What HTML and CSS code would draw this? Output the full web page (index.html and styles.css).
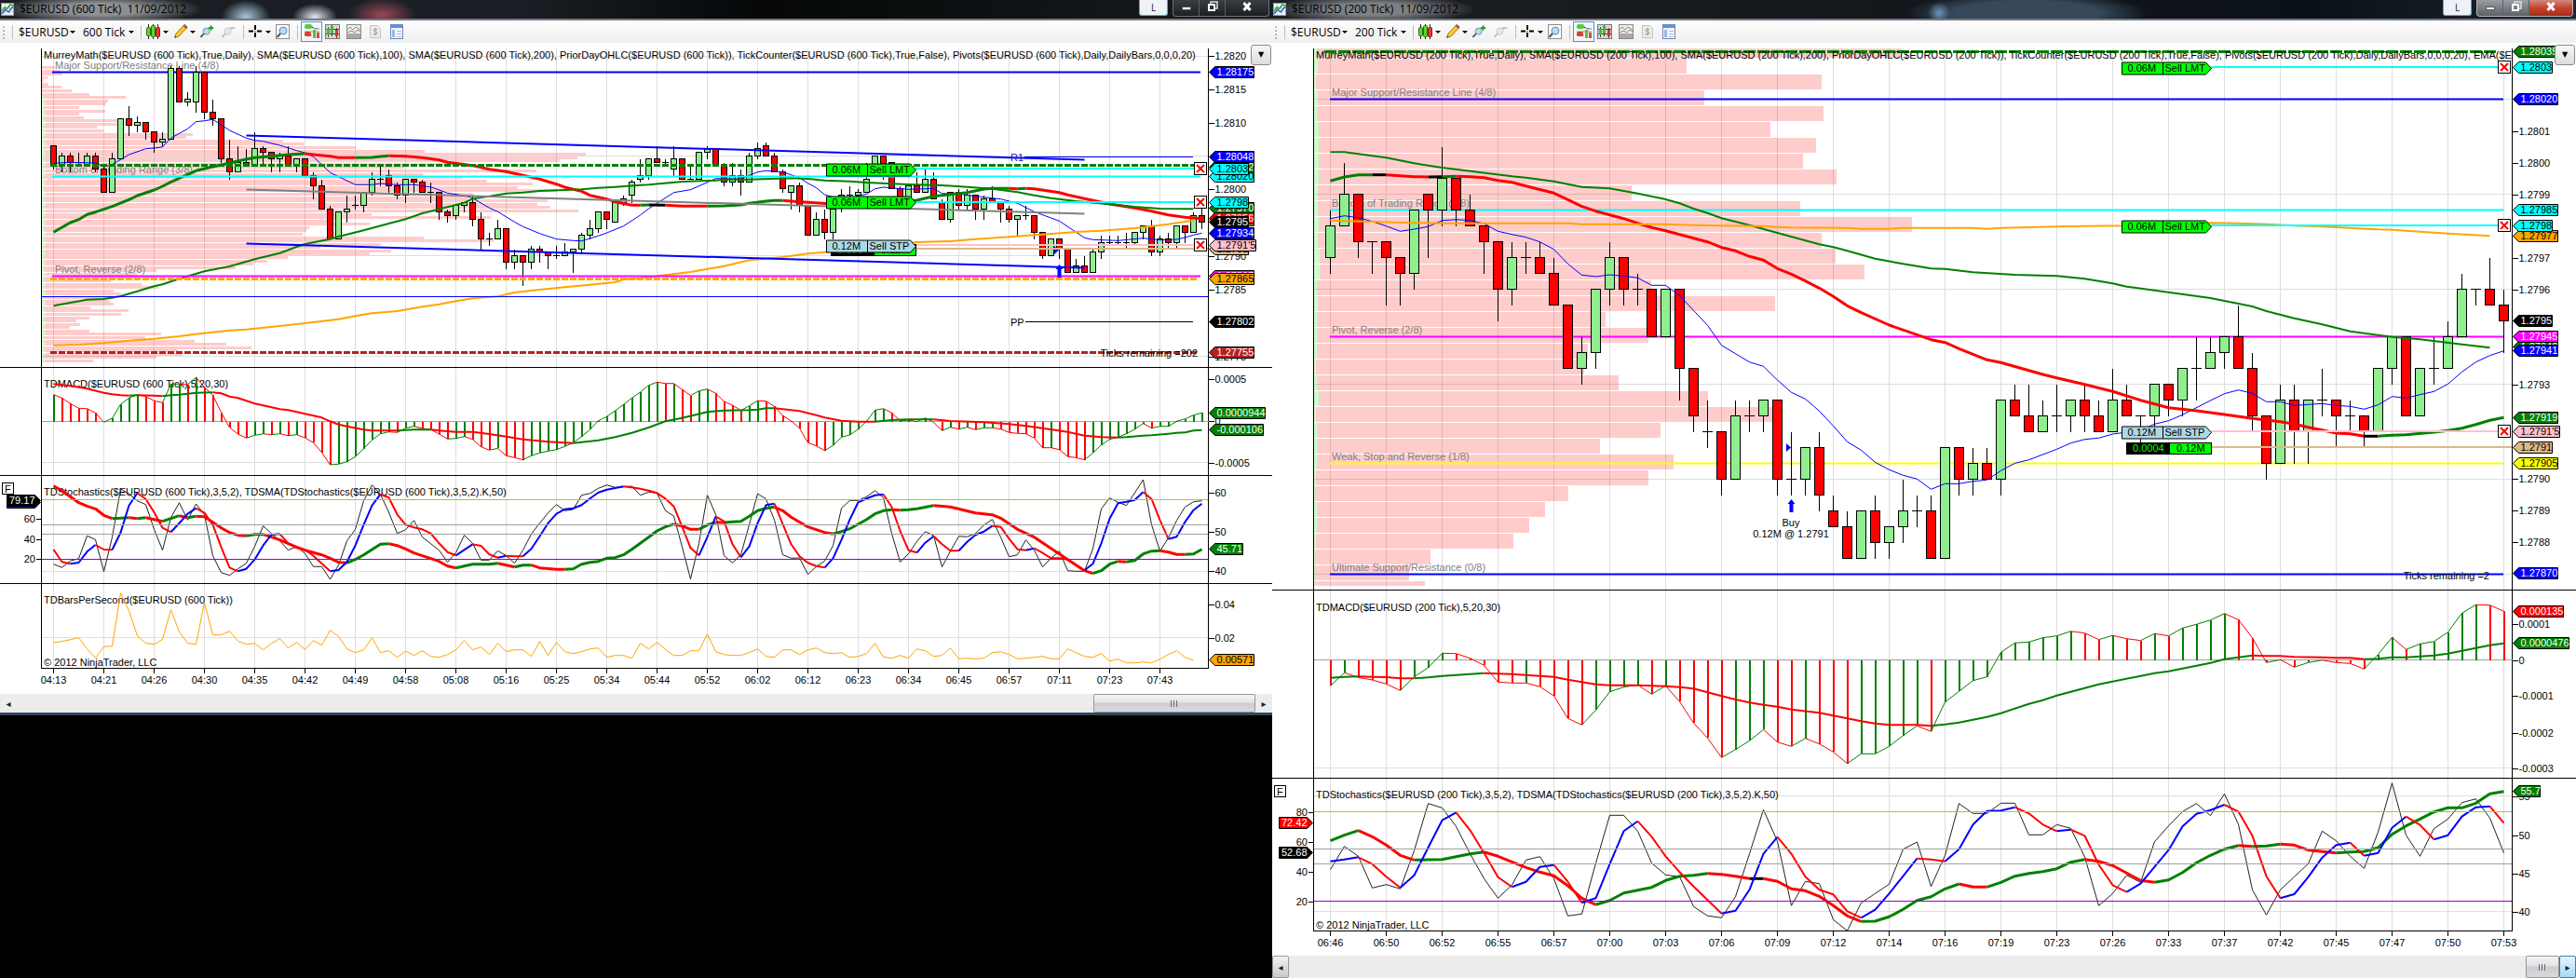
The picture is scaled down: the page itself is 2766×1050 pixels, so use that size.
FILE: index.html
```html
<!DOCTYPE html>
<html lang="en">
<head>
    <meta charset="UTF-8">
    <meta name="viewport" content="width=device-width, initial-scale=1.0">
    <title>$EURUSD Charts</title>
    <link rel="stylesheet" href="styles.css">
</head>
<body>

    <!-- Shared icons -->
    <svg class="icon-defs" width="0" height="0" aria-hidden="true">
        <symbol id="i-app" viewBox="0 0 14 14">
            <rect x="0.5" y="0.5" width="13" height="13" fill="#f4f8fb" stroke="#8aa0b4"/>
            <path d="M4.500 1v12M9.500 1v12M1 5.500h12M1 9.500h12" stroke="#c3d3e2" fill="none"/>
            <path d="M1 9l3-4 3 1 3-4 3 1" stroke="#2fa52f" stroke-width="1.500" fill="none"/>
            <path d="M1 12l4-5 3 3 5-6" stroke="#2b62c4" stroke-width="1.500" fill="none"/>
        </symbol>
        <symbol id="i-candles" viewBox="0 0 16 16">
            <path d="M2.500 0v16M7.500 0v16M12.500 0v16" stroke="#222"/>
            <rect x="0.500" y="3.500" width="4" height="9" rx="1" fill="#5fd42c" stroke="#2a6d12"/>
            <rect x="5.500" y="1.500" width="4" height="12" rx="1" fill="#5fd42c" stroke="#2a6d12"/>
            <rect x="10.500" y="3.500" width="4" height="10" rx="1" fill="#e8392c" stroke="#8c1a12"/>
        </symbol>
        <symbol id="i-pencil" viewBox="0 0 16 16">
            <path d="M1.500 14.500l1.500-4.500 8-8.500 3 3-8 8.500z" fill="#f7c92e" stroke="#a8741a"/>
            <path d="M11 1.500l3 3 1-1.500-2.500-2.500z" fill="#d05c4c" stroke="#8c4a3a"/>
            <path d="M1.500 14.500l.7-2 1.300 1.200z" fill="#333"/>
        </symbol>
        <symbol id="i-zoomin" viewBox="0 0 18 16">
            <circle cx="7.500" cy="7.500" r="4" fill="#b9dcf3" stroke="#6c8ba6"/>
            <path d="M4.500 10.500l-4 4" stroke="#555" stroke-width="2"/>
            <path d="M13 0.500v6M10 3.500h6" stroke="#19a519" stroke-width="2"/>
        </symbol>
        <symbol id="i-zoomout" viewBox="0 0 18 16">
            <circle cx="7.500" cy="7.500" r="4" fill="#e6e6e6" stroke="#c4c4c4"/>
            <path d="M4.500 10.500l-4 4" stroke="#bdbdbd" stroke-width="2"/>
            <path d="M10 3.500h6" stroke="#bdbdbd" stroke-width="2"/>
        </symbol>
        <symbol id="i-cross" viewBox="0 0 16 16">
            <path d="M7 1v5M7 9v5M0 7.500h5M9 7.500h5" stroke="#000" stroke-width="2"/>
            <rect x="6.500" y="7" width="1" height="1"/>
        </symbol>
        <symbol id="i-find" viewBox="0 0 16 16">
            <rect x="0.500" y="0.500" width="14" height="15" fill="#fff" stroke="#8c8c8c"/>
            <circle cx="8" cy="7" r="4" fill="#b9dcf3" stroke="#6c8ba6"/>
            <path d="M5 10l-3.500 4" stroke="#555" stroke-width="2"/>
        </symbol>
        <symbol id="i-trader" viewBox="0 0 16 16">
            <path d="M0 3h9l2 2h5M0 8h16M0 12h8" stroke="#888"/>
            <rect x="0" y="0" width="8" height="5" rx="2" fill="#62c83a"/>
            <rect x="0" y="8" width="7" height="5" rx="2" fill="#e23b30"/>
            <rect x="9" y="6" width="3" height="9" fill="#5fbf35"/>
            <rect x="13" y="9" width="3" height="6" fill="#d84a3e"/>
        </symbol>
        <symbol id="i-bars" viewBox="0 0 16 16">
            <rect x="0.500" y="0.500" width="15" height="15" fill="#d8d8d8" stroke="#777"/>
            <path d="M3.500 3v11M7.500 1v12M12.500 4v11M1 5.500h14M1 10.500h14" stroke="#444"/>
            <rect x="2" y="5" width="3" height="6" fill="#47b82a"/>
            <rect x="6" y="2" width="3" height="8" fill="#47b82a"/>
            <rect x="11" y="6" width="3" height="7" fill="#dd3226"/>
        </symbol>
        <symbol id="i-lines" viewBox="0 0 16 16">
            <rect x="0.500" y="0.500" width="15" height="15" fill="#ececec" stroke="#8a8a8a"/>
            <rect x="1" y="10" width="14" height="5" fill="#a9a9a9"/>
            <path d="M1 6l3-3 3 3 3-3 5 3" stroke="#4fae75" fill="none"/>
            <path d="M1 9l4-2 4 2 3-3 3 2" stroke="#d9635b" fill="none"/>
        </symbol>
        <symbol id="i-dollar" viewBox="0 0 16 16">
            <path d="M2.500 1.500h8l3 3v10h-11z" fill="#ececec" stroke="#c4c4c4"/>
            <path d="M10 6c-1-1.500-4-1-4 .500s4 1 4 3-3.500 2-4.500.500M8 4v8" stroke="#9b9b9b" fill="none"/>
        </symbol>
        <symbol id="i-props" viewBox="0 0 16 16">
            <rect x="1.500" y="0.500" width="13" height="15" fill="#f3f6fc" stroke="#6f86b4"/>
            <rect x="2" y="1" width="12" height="3" fill="#5b93ee"/>
            <rect x="3" y="6" width="3" height="8" fill="#9bb4f0"/>
            <path d="M8 7.500h5M8 10.500h5M8 13.500h5" stroke="#b3bccd"/>
        </symbol>
    </svg>

    <main class="desktop">

        <!-- 600 tick window -->
        <section class="window window-600">
            <header class="titlebar">
                <svg class="app-icon" aria-hidden="true"><use href="#i-app"/></svg>
                <h1>$EURUSD (600 Tick)&nbsp; 11/09/2012</h1>
                <button class="link-btn" type="button">L</button>
                <div class="controls">
                    <button type="button" aria-label="Minimize"><svg viewBox="0 0 14 12"><rect x="2.500" y="6.500" width="9" height="3" fill="#fff" stroke="#555"/></svg></button>
                    <button type="button" aria-label="Restore"><svg viewBox="0 0 14 12"><path d="M5 3V1h7v7h-2" fill="none" stroke="#ddd" stroke-width="1.500"/><rect x="3" y="4" width="6" height="6" fill="none" stroke="#fff" stroke-width="2"/></svg></button>
                    <button class="close" type="button" aria-label="Close"><svg viewBox="0 0 14 12"><path d="M3.500 2l7 8M10.500 2l-7 8" stroke="#fff" stroke-width="3"/></svg></button>
                </div>
            </header>
            <nav class="toolbar" aria-label="600 tick toolbar">
                <span class="grip"></span>
                <span class="sep"></span>
                <label class="pick pick-symbol"><select aria-label="Instrument"><option>$EURUSD</option></select></label>
                <label class="pick pick-period"><select aria-label="Interval"><option>600 Tick</option></select></label>
                <span class="sep"></span>
                <button class="tool drop" type="button" aria-label="Chart style"><svg><use href="#i-candles"/></svg></button>
                <button class="tool drop" type="button" aria-label="Drawing tools"><svg><use href="#i-pencil"/></svg></button>
                <button class="tool" type="button" aria-label="Zoom in"><svg><use href="#i-zoomin"/></svg></button>
                <button class="tool" type="button" aria-label="Zoom out"><svg><use href="#i-zoomout"/></svg></button>
                <span class="sep"></span>
                <button class="tool drop" type="button" aria-label="Cross hair"><svg><use href="#i-cross"/></svg></button>
                <button class="tool" type="button" aria-label="Data box"><svg><use href="#i-find"/></svg></button>
                <span class="sep"></span>
                <div class="tool-group">
                    <button class="tool selected" type="button" aria-label="Chart trader"><svg><use href="#i-trader"/></svg></button>
                    <button class="tool" type="button" aria-label="Data series"><svg><use href="#i-bars"/></svg></button>
                    <button class="tool" type="button" aria-label="Indicators"><svg><use href="#i-lines"/></svg></button>
                    <button class="tool" type="button" aria-label="Strategies"><svg><use href="#i-dollar"/></svg></button>
                    <button class="tool" type="button" aria-label="Properties"><svg><use href="#i-props"/></svg></button>
                </div>
            </nav>
            <div class="chart" id="chart600">
                <button class="menu-btn" type="button" aria-label="Chart menu">&#9660;</button>
            </div>
            <div class="scrollbar">
                <button class="arrow" type="button" aria-label="Scroll left">&#9666;</button>
                <div class="track"><span class="thumb thumb-wide"></span></div>
                <button class="arrow" type="button" aria-label="Scroll right">&#9656;</button>
            </div>
        </section>

        <!-- 200 tick window -->
        <section class="window window-200">
            <header class="titlebar">
                <svg class="app-icon" aria-hidden="true"><use href="#i-app"/></svg>
                <h1>$EURUSD (200 Tick)&nbsp; 11/09/2012</h1>
                <button class="link-btn" type="button">L</button>
                <div class="controls">
                    <button type="button" aria-label="Minimize"><svg viewBox="0 0 14 12"><rect x="2.500" y="6.500" width="9" height="3" fill="#fff" stroke="#555"/></svg></button>
                    <button type="button" aria-label="Restore"><svg viewBox="0 0 14 12"><path d="M5 3V1h7v7h-2" fill="none" stroke="#ddd" stroke-width="1.500"/><rect x="3" y="4" width="6" height="6" fill="none" stroke="#fff" stroke-width="2"/></svg></button>
                    <button class="close" type="button" aria-label="Close"><svg viewBox="0 0 14 12"><path d="M3.500 2l7 8M10.500 2l-7 8" stroke="#fff" stroke-width="3"/></svg></button>
                </div>
            </header>
            <nav class="toolbar" aria-label="200 tick toolbar">
                <span class="grip"></span>
                <span class="sep"></span>
                <label class="pick pick-symbol"><select aria-label="Instrument"><option>$EURUSD</option></select></label>
                <label class="pick pick-period"><select aria-label="Interval"><option>200 Tick</option></select></label>
                <span class="sep"></span>
                <button class="tool drop" type="button" aria-label="Chart style"><svg><use href="#i-candles"/></svg></button>
                <button class="tool drop" type="button" aria-label="Drawing tools"><svg><use href="#i-pencil"/></svg></button>
                <button class="tool" type="button" aria-label="Zoom in"><svg><use href="#i-zoomin"/></svg></button>
                <button class="tool" type="button" aria-label="Zoom out"><svg><use href="#i-zoomout"/></svg></button>
                <span class="sep"></span>
                <button class="tool drop" type="button" aria-label="Cross hair"><svg><use href="#i-cross"/></svg></button>
                <button class="tool" type="button" aria-label="Data box"><svg><use href="#i-find"/></svg></button>
                <span class="sep"></span>
                <div class="tool-group">
                    <button class="tool selected" type="button" aria-label="Chart trader"><svg><use href="#i-trader"/></svg></button>
                    <button class="tool" type="button" aria-label="Data series"><svg><use href="#i-bars"/></svg></button>
                    <button class="tool" type="button" aria-label="Indicators"><svg><use href="#i-lines"/></svg></button>
                    <button class="tool" type="button" aria-label="Strategies"><svg><use href="#i-dollar"/></svg></button>
                    <button class="tool" type="button" aria-label="Properties"><svg><use href="#i-props"/></svg></button>
                </div>
            </nav>
            <div class="chart" id="chart200">
                <button class="menu-btn" type="button" aria-label="Chart menu">&#9660;</button>
            </div>
            <div class="scrollbar">
                <button class="arrow arrow-raised" type="button" aria-label="Scroll left">&#9666;</button>
                <div class="track"><span class="thumb"></span></div>
                <button class="arrow arrow-hot" type="button" aria-label="Scroll right">&#9656;</button>
            </div>
        </section>
    </main>

    <script src="charts.js"></script>
</body>
</html>
```

FILE: styles.css
```css
* {
    box-sizing: border-box;
}
body {
    margin: 0;
    background: #000;
    font-family: "Open Sans", "Noto Sans", sans-serif;
    font-size: 12px;
}
button {
    margin: 0;
    padding: 0;
    border: none;
    background: none;
    font: inherit;
}
.icon-defs {
    position: absolute;
}
.desktop {
    display: grid;
    grid-template-columns: 1366fr 1400fr;
    align-items: start;
}
.window {
    background: #fff;
    min-width: 0;
}
.window-600 {
    border-bottom: 3px solid #33475c;
}

/* Title bar */
.titlebar {
    display: flex;
    align-items: center;
    height: 22px;
    padding: 0 3px 0 1px;
    border-bottom: 2px solid #75797f;
    background: #12161b;
}
.window-600 .titlebar {
    background:
        radial-gradient(ellipse 110px 16px at 108px 10px, #8d8f92 40%, transparent),
        radial-gradient(ellipse 26px 18px at 264px 18px, #a9c6da, transparent),
        radial-gradient(ellipse 24px 14px at 338px 18px, #dfe6f2, transparent),
        radial-gradient(ellipse 36px 18px at 410px 16px, #9c4656, transparent),
        linear-gradient(90deg, #1a1d22, #1b2026 40%, #050708 60%, #1a1d20);
}
.window-200 .titlebar {
    background:
        radial-gradient(ellipse 110px 16px at 108px 10px, #7d8084 40%, transparent),
        radial-gradient(ellipse 12px 12px at 716px 14px, #6d93b4, transparent),
        radial-gradient(ellipse 130px 22px at 810px 14px, #36485a 60%, transparent),
        linear-gradient(90deg, #1c2024, #15191e 40%, #0b1118 80%, #1c252d);
}
.app-icon {
    width: 14px;
    height: 14px;
    margin-right: 6px;
}
.titlebar h1 {
    margin: 0;
    flex: 1;
    font-size: 12px;
    font-weight: normal;
    line-height: 20px;
    color: #000;
}
.link-btn {
    align-self: flex-start;
    width: 31px;
    height: 17px;
    margin-right: 5px;
    border: 1px solid #3fb4e0;
    border-top: none;
    border-radius: 0 0 3px 3px;
    background: #eef2f4;
    font-size: 10px;
    line-height: 14px;
    color: #223;
}
.controls {
    display: flex;
    align-self: flex-start;
    height: 18px;
    border: 1px solid #6d7278;
    border-top: none;
    border-radius: 0 0 4px 4px;
    background: linear-gradient(#3a3e43, #1c1f22);
    overflow: hidden;
}
.controls button {
    width: 28px;
    border-right: 1px solid #5b6066;
}
.controls svg {
    width: 14px;
    height: 12px;
}
.controls .close {
    width: 46px;
    border-right: none;
}
.window-200 .controls {
    border-color: #b0b4b8;
    background: linear-gradient(#9a9da1, #5c6168);
}
.window-200 .controls .close {
    background: linear-gradient(#d08a80, #c8432c 50%, #a32c18);
}

/* Toolbar */
.toolbar {
    display: flex;
    align-items: center;
    gap: 5px;
    height: 24px;
    padding-left: 2px;
    background: linear-gradient(#fdfdfd, #efefef);
}
.grip {
    width: 6px;
    height: 15px;
    background: radial-gradient(circle at 2px 2px, #b8b8b8 1px, transparent 1px) 0 0 / 6px 4px repeat-y;
}
.sep {
    width: 1px;
    height: 15px;
    background: #bdbdbd;
}
.pick {
    position: relative;
    height: 20px;
}
.pick::after,
.drop::after {
    content: "";
    border: 3px solid transparent;
    border-top-color: #000;
    border-bottom: none;
}
.pick::after {
    position: absolute;
    right: 2px;
    top: 9px;
}
.pick select {
    appearance: none;
    width: 100%;
    height: 20px;
    padding: 0 0 0 1px;
    border: none;
    background: none;
    font: inherit;
    color: #000;
}
.pick-symbol {
    width: 64px;
}
.pick-period {
    width: 58px;
}
.tool {
    display: flex;
    align-items: center;
    width: 18px;
    height: 22px;
}
.tool svg {
    width: 16px;
    height: 16px;
}
.drop {
    width: 24px;
    gap: 2px;
}
.tool-group {
    display: flex;
    gap: 3px;
    margin-left: -2px;
}
.tool-group .tool {
    width: 20px;
}
.tool-group .selected {
    width: 23px;
    justify-content: center;
    border: 1px solid #3c9ae8;
    background: #f2f7fc;
}

/* Chart area */
.chart {
    position: relative;
    background: #fff;
}
.menu-btn {
    position: absolute;
    top: 2px;
    right: 1px;
    width: 22px;
    height: 22px;
    border: 1px solid #8a8a8a;
    border-radius: 3px;
    background: linear-gradient(#f6f6f6, #dcdcdc);
    font: 8px "DejaVu Sans", sans-serif;
    line-height: 18px;
}
.pane {
    display: block;
    width: 100%;
    height: auto;
    font-family: "Liberation Sans", Arial, sans-serif;
    font-size: 11px;
}
.pane text {
    fill: #000;
}
.pane .dim {
    fill: #808080;
}
.pane .navy {
    fill: #2020c0;
}
.pane .light {
    fill: #fff;
}
.pane .lime {
    fill: #00ff00;
}
.sharp {
    shape-rendering: crispEdges;
}

/* Scroll bar */
.scrollbar {
    display: flex;
    height: 20px;
    background: #ececec;
}
.window-200 .scrollbar {
    height: 24px;
}
.arrow {
    width: 18px;
    font: 10px "DejaVu Sans", sans-serif;
    color: #222;
}
.arrow-raised {
    border: 1px solid #9a9a9a;
    border-radius: 2px;
    background: linear-gradient(#f2f2f2, #c9c9cb);
}
.arrow-hot {
    border: 1px solid #3c7fb1;
    border-radius: 2px;
    background: linear-gradient(#e3f4fc, #a9dbf5);
}
.track {
    display: flex;
    flex: 1;
    justify-content: flex-end;
}
.thumb {
    width: 36px;
    border: 1px solid #979797;
    border-radius: 2px;
    background:
        repeating-linear-gradient(90deg, #6a6a6a 0 1px, transparent 1px 3px) center / 8px 7px no-repeat,
        linear-gradient(#f3f3f3, #e4e4e6 45%, #cdcdd1 50%, #dadade);
}
.thumb-wide {
    width: 174px;
}
```

FILE: charts.js
```js
const NS = "http://www.w3.org/2000/svg";
let clipCount = 0;

function add(parent, tag, attrs, text) {
    const node = document.createElementNS(NS, tag);
    for (const key in attrs) node.setAttribute(key, attrs[key]);
    if (text !== undefined) node.textContent = text;
    parent.appendChild(node);
    return node;
}

function label(svg, x, y, text, cls, anchor) {
    return add(svg, "text", { x, y: y + 4, class: cls || "", "text-anchor": anchor || "start" }, text);
}

function rect(svg, x, y, width, height, fill, opacity) {
    return add(svg, "rect", { x, y, width, height, fill, "fill-opacity": opacity || 1, class: "sharp" });
}

function hline(svg, x1, x2, y, stroke, width, extra) {
    return add(svg, "line", Object.assign({ x1, x2, y1: y, y2: y, stroke, "stroke-width": width || 1, class: "sharp" }, extra));
}

// Support level: solid core with a soft edge
function level(svg, x1, x2, y, color) {
    hline(svg, x1, x2, y, color, 3, { "stroke-opacity": 0.5 });
    hline(svg, x1, x2, y, color, 1);
}

function makePane(chart, top, height, name) {
    const svg = add(chart.root, "svg", {
        class: "pane", viewBox: `0 ${top} ${chart.width} ${height}`, role: "img", "aria-label": name
    });
    svg.top = top;
    svg.bottom = top + height;
    return svg;
}

function frame(chart, svg, gridRows, from) {
    const top = from || svg.top;
    gridRows.forEach(y => hline(svg, 45, chart.axis, y, "#dedede"));
    for (let i = 0; i < chart.times.length; i++) {
        const x = chart.x(i * chart.every);
        add(svg, "line", { x1: x, x2: x, y1: top, y2: svg.bottom, stroke: "#dedede", class: "sharp" });
    }
    [44.5, chart.axis].forEach(x =>
        add(svg, "line", { x1: x, x2: x, y1: top, y2: svg.bottom, stroke: "#000", class: "sharp" }));
}

// "i,value" pairs, values in thirds of a pixel below origin, optional trailing k = black
function parse(str) {
    return str.trim().split(/\s+/).map(p => {
        const [i, v] = p.split(",");
        return { i: +i, v: parseFloat(v), black: v.endsWith("k") };
    });
}
function values(str) {
    return str.trim().split(/\s+/).map((v, i) => ({ i, v: +v }));
}

function series(chart, svg, pts, origin, width, up, down) {
    let color = up;
    let d = "";
    let last = null;
    const flush = () => {
        if (d) add(svg, "path", { d, fill: "none", stroke: last, "stroke-width": width, "stroke-linejoin": "round" });
    };
    for (let n = 1; n < pts.length; n++) {
        const a = pts[n - 1], b = pts[n];
        if (b.v < a.v) color = up;
        if (b.v > a.v) color = down;
        const c = b.black ? "#000" : color;
        const end = `L${chart.x(b.i)} ${(origin + b.v / 3).toFixed(1)}`;
        if (c !== last) {
            flush();
            last = c;
            d = `M${chart.x(a.i)} ${(origin + a.v / 3).toFixed(1)}`;
        }
        d += end;
    }
    flush();
}

function histogram(chart, svg, pts, origin, zero) {
    hline(svg, 45, chart.axis, zero, "#a0a0a0");
    pts.forEach((p, n) => {
        const next = pts[n - 1] || { v: p.v - chart.firstBar };
        const color = p.v > next.v ? "#ff0000" : "#008000";
        const y = Math.round(origin + p.v / 3);
        rect(svg, chart.x(p.i) - 1, Math.min(y, zero), 2, Math.abs(y - zero), color);
    });
    series(chart, svg, pts, origin, 1, "#008000", "#ff0000");
}

// Candle: colour,high,top,bottom,low in half pips below the first level
function candles(chart, svg, str) {
    const half = chart.step > 10 ? 5 : 3;
    str.trim().split(/\s+/).forEach((c, i) => {
        const p = c.slice(1).split(",").map(n => Math.round(chart.base + n * chart.halfPip) - 0.5);
        const x = chart.x(i);
        add(svg, "line", { x1: x, x2: x, y1: p[0], y2: p[3] + 0.5, stroke: "#000", class: "sharp" });
        if (p[1] === p[2]) {
            hline(svg, x - half - 0.5, x + half + 0.5, p[1], "#000");
            return;
        }
        add(svg, "rect", {
            x: x - half, y: p[1], width: half * 2, height: p[2] - p[1],
            fill: c[0] === "g" ? "#90ee90" : "#ff0000", stroke: "#000", class: "sharp"
        });
    });
}

function axisLabels(chart, svg, rows) {
    rows.forEach(([y, text]) => {
        hline(svg, chart.axis, chart.axis + 6, y, "#000");
        label(svg, chart.axis + 7, y, text);
    });
}
function leftLabels(svg, rows) {
    rows.forEach(([y, text]) => {
        hline(svg, 39, 44, y, "#000");
        label(svg, 38, y, text, "", "end");
    });
}

// Price flag, tip on the axis
function tag(chart, svg, y, text, fill, width, cls) {
    const x = chart.axis + 1;
    add(svg, "path", { d: `M${x} ${y + 0.5}l6 -6h${width}v12h-${width}z`, fill, stroke: "#000" });
    label(svg, x + 8, y, text, cls);
}
function leftTag(svg, y, text, fill) {
    add(svg, "path", { d: `M43.500 ${y + 0.5}l-6 -6h-30v12h30z`, fill, stroke: "#000" });
    label(svg, 10, y, text, "light");
}

function order(svg, x, y, qty, kind, fill) {
    add(svg, "path", { d: `M${x} ${y - 6}h90l6 6.500l-6 6.500h-90z`, fill, stroke: "#000" });
    add(svg, "line", { x1: x + 44, x2: x + 44, y1: y - 6, y2: y + 7, stroke: "#000", class: "sharp" });
    label(svg, x + 6, y, qty);
    label(svg, x + 46, y, kind);
}
function position(svg, x, y) {
    rect(svg, x, y - 6, 92, 13, "#000");
    rect(svg, x + 47, y - 5, 44, 11, "#00ff00");
    label(svg, x + 7, y, "0.0004", "lime");
    label(svg, x + 54, y, "0.12M");
}
function cancelBox(svg, x, y) {
    add(svg, "rect", { x: x + 0.5, y: y - 6.5, width: 13, height: 13, fill: "#fff", stroke: "#000", class: "sharp" });
    add(svg, "path", { d: `M${x + 3} ${y - 4}l8 8m0 -8l-8 8`, stroke: "#ff0000", "stroke-width": 2 });
}

function heading(chart, svg, tick) {
    const s = `$EURUSD (${tick} Tick)`;
    const id = "clip" + clipCount++;
    const clip = add(svg, "clipPath", { id });
    add(clip, "rect", { x: 45, y: svg.top, width: chart.axis - 45, height: 30 });
    const t = label(svg, 47, 59,
        `MurreyMath(${s},True,Daily), SMA(${s},100), SMA(${s},200), PriorDayOHLC(${s}), ` +
        `TickCounter(${s},True,False), Pivots(${s},Daily,DailyBars,0,0,0,20)` + (tick === 200 ? ", EMA($EURUSD (200 Tick),20)" : ""));
    t.setAttribute("clip-path", `url(#${id})`);
}

function timeAxis(chart, top, height) {
    const svg = makePane(chart, top, height, "Time axis");
    hline(svg, 44, chart.axis + 0.5, top + 0.5, "#000");
    chart.times.forEach((t, n) => {
        const x = chart.x(n * chart.every);
        add(svg, "line", { x1: x, x2: x, y1: top, y2: top + 6, stroke: "#000", class: "sharp" });
        label(svg, x, top + 13, t, "", "middle");
    });
}

function focusBox(svg, y) {
    add(svg, "rect", { x: 2.5, y: y - 6, width: 12, height: 12, fill: "#fff", stroke: "#000", class: "sharp" });
    label(svg, 5, y, "F");
}

function buyArrow(svg, x, y) {
    add(svg, "path", { d: `M${x} ${y}l4 5h-2v9h-4v-9h-2z`, fill: "#0000ff" });
}


/* ---------- 600 tick chart ---------- */

const c600 = {
    root: document.getElementById("chart600"), width: 1366, axis: 1297.5, step: 9, every: 6,
    base: 78, halfPip: 3.58, firstBar: -1, x: i => 57.5 + i * 9,
    times: "04:13 04:21 04:26 04:30 04:35 04:42 04:49 04:58 05:08 05:16 05:25 05:34 05:44 05:52 06:02 06:12 06:23 06:34 06:45 06:57 07:11 07:23 07:43".split(" ")
};

function price600() {
    const svg = makePane(c600, 46, 349, "$EURUSD 600 tick price");
    frame(c600, svg, [60.5, 167.5, 274.5, 382.5], 52);

    const profile = [61, 66, 69, 53, 49, 54, 68, 79, 98, 135, 115, 112, 85, 112, 83, 90,
        132, 127, 104, 110, 205, 200, 303, 324, 382, 455, 627, 620, 600, 497, 434, 575, 452, 497, 522, 570,
        556, 597, 506, 502, 587, 575, 591, 620, 397, 527, 350, 395, 332, 328, 323, 455, 529, 407, 344, 419,
        395, 309, 286, 270, 253, 167, 145, 168, 118, 150, 170, 121, 128, 123, 117, 120, 97, 137, 128, 96,
        81, 84, 75, 95, 171, 156, 208, 241, 270, 190, 194, 168, 99];
    profile.forEach((end, n) => {
        const y = Math.round(71 + n * 3.58);
        if (n > 8) rect(svg, 45, y, n % 3 + 2, 3, "#00ff00", 0.2);
        rect(svg, n > 8 ? 47 + n % 3 : 45, y, end - 47, 3, "#ff0000", 0.2);
    });

    label(svg, 59, 70, "Major Support/Resistance Line (4/8)", "dim");
    label(svg, 59, 182, "Bottom of Trading Range (3/8)", "dim");
    label(svg, 59, 289, "Pivot, Reverse (2/8)", "dim");
    heading(c600, svg, 600);
    level(svg, 56, 1289, 77.5, "#0000ff");

    candles(c600, svg, `
        r22,22,28,29 g24,25,28,30 r24,25,27,30 r24,27,27,28 g24,25,28,28 r24,25,29,30 r28,29,36,36 g24,26,36,36
        g14,14,26,26 r10,14,16,19 g13,15,16,18 r15,15,18,20 r18,18,21,24 g18,20,21,22 g-2,-1,20,20 r-2,-1,9,9
        g6,8,9,10 g-2,0,9,12 r0,0,12,14 r8,12,14,16 r14,14,26,27 r20,26,30,32 g22,27,30,30 r23,27,28,28
        g18,23,28,28 r22,23,24,28 r24,24,26,30 g24,25,26,30 r22,25,28,28 g26,26,28,30 r26,26,31,31 r30,31,34,38
        r32,34,41,41 r40,41,50,50 g42,42,50,50 g37,41,42,45 r37,40,40,41 g36,36,40,42 g30,32,36,37 r28,32,32,34
        r29,31,34,36 r33,34,37,38 g32,32,37,39 r32,32,33,36 r32,33,36,36 r33,36,36,39 r36,36,42,44 r41,42,43,45
        g40,40,43,44 g39,39,40,42 r37,39,44,46 r42,44,50,53 r48,50,50,52 g44,47,50,50 r47,47,57,59 g53,55,57,59
        r55,55,57,64 g52,53,57,59 r52,53,54,57 r54,54,55,59 r52,55,55,56 g51,54,55,55 g53,53,54,60 g48,49,53,54
        g44,47,49,50 g42,42,47,48 r42,42,44,47 g38,39,45,45 g37,38,39,40 g32,33,37,39 g26,31,32,33 g26,26,31,32
        r22,26,27,27 r26,27,27,28 g22,26,29,31 r26,26,32,32 r28,32,32,32 g24,24,32,32 g22,23,24,26 r23,23,28,28
        r27,28,33,34 g27,31,33,34 r29,31,33,37 g24,25,33,33 g21,23,25,26 r21,22,25,25 r24,25,30,30 r29,30,35,36
        g34,34,36,41 r33,34,40,42 r40,40,49,49 g42,44,49,49 r41,44,48,50 g40,41,48,50 g35,37,40,42 r34,37,37,38
        g35,36,37,37 g27,32,36,36 g25,25,31,31 r25,25,31,32 r27,27,35,35 r34,35,38,38 g34,34,38,38 r30,34,36,36
        g29,32,36,36 r30,32,38,38 r38,39,44,44 g36,36,44,45 r35,36,40,41 g35,37,40,41 r37,37,41,44 g37,38,41,44
        r34,38,39,39 r39,39,41,45 r40,41,44,45 g43,43,44,49 r40,43,43,44 r43,43,48,50 r48,48,55,56 g50,50,55,55
        r50,50,53,56 r53,53,60,60 g56,58,60,60 r55,58,60,60 g53,54,60,60 g49,51,54,56 r49,51,51,52 r49,51,51,52
        r48,51,51,53 g48,48,51,52 g46,46,48,50 r44,46,54,55 g49,50,54,55 r48,50,51,53 g46,46,51,53 r46,46,48,51
        g42,43,48,48 r40,43,45,47`);

    series(c600, svg, parse(`0,346 2,343 5,345 6,357 7,350 8,334 9,318 11,299 12,297 13,293 14,265 16,235 17,212 18,209 19,205
        20,222 21,240 23,265 24,272 25,275 27,288 29,305 30,312 31,325 33,376 36,415 38,415 39,411 41,415 43,415 45,422 47,442
        49,450 50,458 52,490 53,502 55,535 56,550 58,572 60,590 62,595 63,596 65,580 66,570 68,548 70,513 71,492 72,475 74,440
        76,431 79,395 80,396 82,396 83,385 84,374 85,370 87,374 88,383 89,393 90,410 91,425 92,447 93,455 95,458 97,445 98,428
        99,423 102,430 104,428 105,427 106,443 108,444 110,452 113,461 115,475 117,502 119,522 120,532 122,568 123,586 124,592
        127,595 130,587 132,593 134,591 135,585 136,577 137,571`), 60, 1, "#0000ff", "#0000ff");
    series(c600, svg, parse(`0,932 3,930 6,925 9,917 12,911 15,903 17,896 21,884 23,881 27,870 30,861 34,848 36,838 38,829
        41,822 44,808 46,800 48,790 50,781 53,775 55,762 58,753 61,745 64,737 67,729 68,720 71,713 73,706 76,696 80,677 83,658
        87,648 90,637 93,630 103,600 107,597 110,590 114,583 118,575 122,567 125,563 129,555 133,542 136,530`), 60, 2, "#ffa500", "#ffa500");
    series(c600, svg, parse(`0,568 2,537 3,527 4,511 5,503 7,485 9,463 10,450 12,432 13,420 14,406 16,382 17,370 19,357 21,345
        23,333 24,328 26,323 28,318 30,315 31,318 33,323 34,328 36,328 38,327 39,324 40,322 42,323 44,328 46,335 47,343 50,353
        52,365 54,373 56,385 58,397 60,413 61,423 62,430 63,436 64,449 66,461 67,470 69,481 70,481 71,480 73,481k 75,484 78,484
        80,483 82,480 83,475 85,468 86,466 87,466 88,468 90,472 93,477 96,484 99,475 101,470 103,465 105,452 109,440 111,429
        112,427 114,427 115,428 116,427 117,428 120,440 121,448 123,460 126,477 129,490 131,500 133,512 135,520 137,524`),
        60, 3, "#008000", "#ff0000");
    series(c600, svg, parse(`0,805 2,795 4,785 6,783 8,774 10,758 12,742 13,736 15,718 18,694 21,678 24,655 27,635 29,615 30,606
        33,590 34,582 37,562 40,540 42,526 44,507 47,487 49,473 50,460 52,452 54,443 56,440 58,435 61,432 63,430 65,425 67,422
        70,416 71,415 75,405 79,401 80,398 83,398 88,394 90,396 92,401 95,404 97,408 102,414 106,417 109,422 112,428 115,439
        117,449 119,458 122,468 126,478 129,486 132,492 136,493`), 60, 2, "#008000", "#008000");

    level(svg, 56, 1289, 189.5, "#00ffff");
    level(svg, 56, 1289, 296.5, "#ff00ff");
    const dash = { "stroke-dasharray": "7 2" };
    hline(svg, 54, 1285, 177.5, "#008000", 3, dash);
    hline(svg, 54, 1285, 299.5, "#ffa500", 3, dash);
    hline(svg, 54, 1285, 378.5, "#b22222", 3, dash);
    hline(svg, 45, 1297, 318.5, "#0000ff");

    // Regression channel
    [[145.5, 171.5, "#0000ff"], [203.5, 229.5, "#808080"], [261.5, 287.5, "#0000ff"]].forEach(([y1, y2, stroke]) =>
        add(svg, "line", { x1: 264.5, x2: 1164.5, y1, y2, stroke, "stroke-width": 2 }));

    label(svg, 1085, 169, "R1", "navy");
    hline(svg, 1100, 1281, 168.5, "#0000ff");
    label(svg, 1085, 346, "PP");
    hline(svg, 1101, 1281, 345.5, "#000");
    label(svg, 1286, 379, "Ticks remaining =202", "", "end");

    buyArrow(svg, 1137.5, 284);
    add(svg, "path", { d: "M1132 264l5 4.500l-5 4.500z", fill: "#0000ff" });

    hline(svg, 983, 1283, 181, "#00ffff", 2);
    hline(svg, 983, 1283, 217, "#00ffff", 2);
    hline(svg, 983, 1283, 263, "#ffc0cb", 2);
    hline(svg, 983, 1297, 267, "#deb887", 2);
    order(svg, 887.5, 182, "0.06M", "Sell LMT", "#00ff00");
    order(svg, 887.5, 217, "0.06M", "Sell LMT", "#00ff00");
    position(svg, 892, 268);
    order(svg, 887.5, 264, "0.12M", "Sell STP", "#add8e6");
    [181, 217, 263].forEach(y => cancelBox(svg, 1282, y));

    axisLabels(c600, svg, [[60, "1.2820"], [96, "1.2815"], [132, "1.2810"], [203, "1.2800"], [275, "1.2790"], [311, "1.2785"], [383, "1.2775"]]);
    tag(c600, svg, 77, "1.28175", "#0000ff", 42, "light");
    tag(c600, svg, 189, "1.28020", "#00ffff", 42);
    tag(c600, svg, 179, "1.28032", "#008000", 42, "light");
    tag(c600, svg, 168, "1.28048", "#0000ff", 42, "light");
    tag(c600, svg, 181, "1.2803", "#00ffff", 36);
    tag(c600, svg, 223, "1.27970", "#008000", 42, "light");
    tag(c600, svg, 217, "1.2798", "#00ffff", 36);
    tag(c600, svg, 236, "1.27953", "#ffa500", 42);
    tag(c600, svg, 234, "1.27956", "#ff0000", 42, "light");
    tag(c600, svg, 238, "1.2795", "#000", 36, "light");
    tag(c600, svg, 250, "1.27934", "#0000ff", 42, "light");
    tag(c600, svg, 267, "1.2791", "#deb887", 36);
    tag(c600, svg, 263, "1.2791'5", "#ffc0cb", 44);
    tag(c600, svg, 296, "1.27867", "#ff00ff", 42, "light");
    tag(c600, svg, 299, "1.27865", "#ffa500", 42);
    tag(c600, svg, 345, "1.27802", "#000", 42, "light");
    tag(c600, svg, 378, "1.27755", "#b22222", 42, "light");
    hline(svg, 0, 1366, 394.5, "#000");
}

function macd600() {
    const svg = makePane(c600, 395, 116, "TDMACD");
    frame(c600, svg, [496.5]);
    label(svg, 47, 412, "TDMACD($EURUSD (600 Tick),5,20,30)");
    histogram(c600, svg, values(`101 112 130 145 146 160 190 177 132 112 101 107 121 127 67 67 68 46 77 103 158 207 228 241 232 227
        230 227 233 230 240 256 287 327 325 317 301 275 247 227 221 223 209 203 210 213 228 244 242 236 245 269 280 274 298 304
        311 298 289 283 278 268 256 236 214 185 172 153 133 112 93 71 61 65 65 85 104 89 83 97 123 135 152 137 121 122 139 169
        186 209 256 266 281 265 238 231 212 187 151 146 160 185 183 188 176 190 217 206 212 206 214 208 208 212 223 226 227 241
        272 272 278 301 304 311 289 263 245 238 227 212 194 209 203 203 187 179 167 160`), 390, 452.5);
    series(c600, svg, parse(`0,67 2,73 4,82 6,95 7,100 8,103 9,104 10,103 12,104 13,106 14,103 15,101 17,95 19,94 20,97 21,107
        22,112 24,130 27,148 28,151 30,163 32,175 33,187 34,197 35,203 37,214 38,217 41,217 42,215 43,214 45,214 46,217 48,221
        50,221 52,228 54,236 56,245 59,253 62,257 63,254 65,248 67,238 69,224 71,207 73,187 75,176 78,157 80,152 83,151 84,149
        85,145 86,145 89,154 91,167 92,175 94,185 96,188 98,188 100,183 102,181 105,181 107,186 111,190 114,196 116,202 118,209
        121,221 123,233 125,238 127,239 128,238 130,233 131,232 133,227 134,224 135,223 136,217 137,215`), 390, 2, "#008000", "#ff0000");
    axisLabels(c600, svg, [[407, "0.0005"], [452, "0"], [497, "-0.0005"]]);
    tag(c600, svg, 443, "0.0000944", "#008000", 54, "light");
    tag(c600, svg, 461, "-0.000106", "#008000", 52, "light");
    hline(svg, 0, 1366, 510.5, "#000");
}

function stoch600() {
    const svg = makePane(c600, 511, 116, "TDStochastics");
    frame(c600, svg, [613.5]);
    label(svg, 47, 528, "TDStochastics($EURUSD (600 Tick),3,5,2), TDSMA(TDStochastics($EURUSD (600 Tick),3,5,2).K,50)");
    series(c600, svg, parse(`0,647 1,658 2,637 3,629 4,556 5,568 6,671 7,560 8,405 9,420 10,443 11,455 12,535 13,602 14,497
        15,449 16,505 17,453 18,487 19,620 20,674 21,683 22,662 23,644 24,590 25,524 26,548 27,572 28,602 29,590 30,613 31,655
        32,655 33,696 34,650 35,572 36,535 37,443 38,392 39,422 40,480 41,548 42,536 43,506 44,560 46,602 47,641 48,610 49,554
        50,580 51,634 52,634 53,604 54,620 55,644 56,602 57,550 58,515 59,482 60,455 61,475 62,471 63,425 64,419 65,403 66,392
        67,400 68,398 69,396 70,425 71,415 72,418 73,475 74,492 75,592 76,695 77,580 78,425 79,487 80,620 81,643 82,617 83,520
        84,420 85,437 86,505 87,617 88,628 89,627 90,680 91,655 92,637 93,587 94,467 95,442 96,442 97,430 98,410 99,433 100,548
        101,640 102,614 103,574 104,542 105,555 106,656 107,605 108,557 109,559 110,548 111,521 112,503 113,560 114,623 115,617
        116,569 117,602 118,656 119,628 120,605 121,668 122,670 123,670 124,597 125,469 126,434 127,448 128,458 129,417 130,375
        131,520 132,605 133,563 134,506 135,463 136,446 137,443`), 390, 1, "#222", "#222");
    series(c600, svg, parse(`0,395 1,410 2,430 3,449 4,460 5,469 6,490 7,500 8,499 9,497 10,500 11,497 12,503 13,509 14,500
        15,491 16,497 17,493 18,494 19,512 20,530 21,545 22,554 23,556 24,551 25,551 26,560 27,569 28,581 29,592 30,602 32,617
        33,628 34,641 35,643 36,632 37,617 38,600 39,583 40,581 41,587 42,598 43,611 46,638 47,653 48,659 49,653 50,647 52,647
        53,644 54,650 55,656 56,650 57,650 58,659 60,664 61,664 62,662 63,647 64,641 65,638 66,628 67,626 68,617 69,599 70,580
        71,560 72,540 73,527 74,518 75,524 76,535 77,535 78,521 79,512 80,513 81,511 82,509 83,493 84,475 85,467 86,463 87,475
        88,496 90,527 92,545 93,550 94,542 95,533 97,503 98,485 99,475 100,472 101,473 102,472 103,469 105,458 107,463 110,482
        112,488 113,499 115,535 117,560 119,596 121,632 123,668 124,677 125,668 126,647 127,638 128,640 129,635 130,614 131,605
        132,604 133,608 134,616 135,616 136,614 137,599`), 390, 3, "#008000", "#ff0000");
    series(c600, svg, parse(`0,600 1,640 2,646 3,642 4,607 5,585 6,600 7,601 8,545 9,458 10,418 11,437 12,480 13,530 14,544
        15,515 16,485 17,467 18,482 19,520 20,592 21,658 22,670 23,662 24,632 25,587 26,552 27,550 28,580 29,595 30,601 31,620
        32,645 33,670 34,666 35,640 36,587 37,520 38,458 39,422 40,433 41,487 42,520 43,529 44,535 45,548 46,580 47,608 48,619
        49,601 50,583 51,588 52,616 53,626 54,620 55,622 56,622 57,598 58,557 59,515 60,485 61,470 62,467 63,457 64,436 65,416
        66,407 67,402 68,397 69,400 70,404 71,410 72,418 73,436 74,461 75,527 76,595 77,619 78,560 79,494 80,509 81,583 82,625
        83,590 84,515 85,457 86,452 87,518 88,583 89,622 90,643 91,653 92,658 93,628 94,569 95,503 96,448 97,436 98,425 99,422
        100,463 101,540 102,602 103,610 104,578 105,557 106,583 107,604 108,604 109,575 110,553 111,542 112,524 113,527 114,565
        115,599 116,602 117,596 118,611 119,628 120,628 121,632 122,650 123,667 124,646 125,580 126,500 127,451 128,446 129,440
        130,415 131,437 132,505 133,566 134,559 135,511 136,473 137,452`), 390, 2, "#0000ff", "#ff0000");
    hline(svg, 45, 1297, 536.5, "#9acd32");
    hline(svg, 45, 1297, 563.5, "#a0a0a0");
    hline(svg, 45, 1297, 573.5, "#a0a0a0");
    hline(svg, 45, 1297, 600.5, "#9400d3");
    axisLabels(c600, svg, [[529, "60"], [571, "50"], [613, "40"]]);
    leftLabels(svg, [[557, "60"], [579, "40"], [600, "20"]]);
    tag(c600, svg, 589, "45.71", "#008000", 30, "light");
    focusBox(svg, 524.5);
    leftTag(svg, 539, "74.01", "#0000ff");
    leftTag(svg, 537, "79.17", "#000");
    hline(svg, 0, 1366, 626.5, "#000");
}

function bars600() {
    const svg = makePane(c600, 627, 90, "TDBarsPerSecond");
    frame(c600, svg, [684.5]);
    label(svg, 47, 644, "TDBarsPerSecond($EURUSD (600 Tick))");
    series(c600, svg, values(`899 896 890 884 920 949 913 911 740 797 878 902 905 889 794 865 902 905 770 875 875 863 895 905 902
        923 902 887 917 899 922 893 908 860 880 920 932 923 884 932 926 947 927 941 926 944 947 938 923 893 923 914 938 902 929
        923 923 944 896 941 899 929 935 929 920 917 947 941 941 950 902 920 899 922 941 941 926 926 872 929 938 941 941 932 920
        944 947 923 923 938 923 917 932 935 932 947 944 935 902 946 950 941 950 920 926 944 941 917 952 950 952 950 932 929 938
        952 950 947 944 952 952 920 932 944 947 935 959 953 965 965 962 965 953 938 926 947 957`), 390, 1, "#ffa500", "#ffa500");
    label(svg, 47, 711, "© 2012 NinjaTrader, LLC");
    axisLabels(c600, svg, [[649, "0.04"], [685, "0.02"]]);
    tag(c600, svg, 708, "0.00571", "#ffa500", 42);
}


/* ---------- 200 tick chart ---------- */

const c200 = {
    root: document.getElementById("chart200"), width: 1400, axis: 1331.5, step: 15, every: 4,
    base: 107, halfPip: 17, firstBar: 1, x: i => 62.5 + i * 15,
    times: "06:46 06:50 06:52 06:55 06:57 07:00 07:03 07:06 07:09 07:12 07:14 07:16 07:19 07:23 07:26 07:33 07:37 07:42 07:45 07:47 07:50 07:53".split(" ")
};

function price200() {
    const svg = makePane(c200, 46, 588, "$EURUSD 200 tick price");
    frame(c200, svg, [106.5, 208.5, 310.5, 412.5, 514.5, 616.5], 52);

    const profile = [676, 445, 590, 464, 592, 535, 584, 570, 606, 386, 567, 687, 590, 605, 636, 407, 540, 358, 404,
        339, 335, 372, 468, 540, 417, 352, 431, 404, 318, 293, 276, 259, 170, 147, 164];
    const buys = [3, 4, 2, 4, 3, 5, 5, 5, 5, 4, 4, 5, 4, 6, 6, 3, 4, 3, 3, 3, 2, 3, 5, 2, 3, 3, 3, 2, 1, 3, 3, 2, 1, 1, 1];
    profile.forEach((end, n) => {
        const y = n ? 46 + n * 17 : 52;
        const h = n === 0 ? 10 : n === profile.length - 1 ? 5 : 16;
        rect(svg, 45, y, buys[n], h, "#00ff00", 0.2);
        rect(svg, 45 + buys[n], y, end - 45 - buys[n], h, "#ff0000", 0.2);
    });

    label(svg, 64, 99, "Major Support/Resistance Line (4/8)", "dim");
    label(svg, 64, 218, "Bottom of Trading Range (3/8)", "dim");
    label(svg, 64, 354, "Pivot, Reverse (2/8)", "dim");
    label(svg, 64, 490, "Weak, Stop and Reverse (1/8)", "dim");
    label(svg, 64, 609, "Ultimate Support/Resistance (0/8)", "dim");
    level(svg, 62, 1322, 106.5, "#0000ff");
    level(svg, 62, 1322, 225.5, "#00ffff");
    level(svg, 62, 1322, 361.5, "#ff00ff");
    level(svg, 62, 1322, 497.5, "#ffff00");
    level(svg, 62, 1322, 616.5, "#0000ff");
    hline(svg, 56, 1314, 55.5, "#008000", 3, { "stroke-dasharray": "13 2" });
    heading(c200, svg, 200);

    candles(c200, svg, `
        g7,8,10,11 g4,6,8,8 r6,6,9,10 r9,9,9,11 r9,9,10,13 r10,10,11,13 g7,7,11,12 r6,6,7,10
        g3,5,7,8 r5,5,7,8 r6,7,8,8 r8,8,9,11 r9,9,12,14 g9,10,12,13 r9,10,10,11 r9,10,11,11
        r10,11,13,13 r13,13,17,17 g15,16,17,18 g12,12,16,17 g9,10,12,13 r10,10,12,13 r11,12,12,13 r12,12,15,15
        g12,12,15,15 r12,12,17,19 r17,17,20,21 r19,21,21,22 r21,21,24,25 g19,20,24,24 r19,20,20,21 g19,19,20,21
        r19,19,24,25 r21,24,24,25 g22,22,24,25 r21,22,25,26 r25,26,27,27 r26,27,29,29 g26,26,29,29 r25,26,28,29
        g27,27,28,29 g24,26,27,28 r25,26,26,27 r25,26,29,29 g22,22,29,29 r22,22,24,25 g22,23,24,25 r22,23,24,24
        g19,19,24,25 r18,19,20,20 r18,20,21,21 g19,20,21,21 r18,20,20,21 g19,19,20,21 r18,19,20,21 r19,20,21,21
        g17,19,21,21 r18,19,20,20 r20,20,20,22 g18,18,20,21 r18,18,19,20 g17,17,19,20 r15,17,17,19 g15,16,17,17
        g15,15,16,17 r13,15,17,17 r16,17,20,21 r20,20,23,24 g18,19,23,23 r18,19,21,23 g19,19,21,23 r17,19,19,20
        r19,19,20,22 r19,20,20,21 r20,20,21,22 g17,17,21,21 g15,15,17,18 r15,15,20,20 g17,17,20,20 r15,17,17,18
        g14,15,17,17 g11,12,15,15 r12,12,12,13 r10,12,13,13 r12,13,14,16`);

    series(c200, svg, parse(`0,704 1,695 2,701 3,713 4,728 5,745 6,738 7,730 8,710 9,707 10,710 11,720 12,745 13,755 14,764 15,779
        16,803 17,850 18,886 19,891 20,885 21,889 22,895 23,919 24,919 25,952 26,1000 27,1048 28,1112 30,1166 31,1180 32,1224
        33,1264 34,1285 35,1324 36,1372 37,1423 38,1450 39,1489 40,1513 41,1531 42,1543 43,1576 44,1558 45,1558 46,1550 47,1546
        48,1516 49,1492 50,1481 52,1447 53,1427 54,1415 55,1411 56,1398 57,1392 58,1385 59,1366 60,1355 61,1336 63,1290 64,1268
        65,1256 66,1267 67,1294 68,1294 69,1306 71,1300 72,1306 73,1309 74,1318 75,1304 76,1277 77,1282 78,1271 79,1261 80,1237
        81,1198 82,1166 83,1145 84,1130`), 0, 1, "#0000ff", "#0000ff");
    series(c200, svg, parse(`0,490 1,490 4,508 6,526 8,540 13,568 14,572 16,584 18,602 20,607 22,623 24,642 25,655 26,672 27,686
        28,703 29,714 30,725 32,750 35,787 36,796 37,808 39,833 41,850 42,857 43,865 44,866 46,877 49,885 52,889 54,898 56,913
        57,923 63,960 65,978 66,987 67,1002 69,1025 71,1045 73,1067 76,1085 78,1093 81,1109 83,1120`), 0, 2, "#008000", "#008000");
    series(c200, svg, parse(`0,583 1,570 2,563 3,563 4,563k 6,569 7,570 8,569k 9,568 10,569 11,572 12,581 13,587 14,599 16,622
        17,643 18,665 19,680 21,704 22,719 23,733 24,743 26,767 27,779 28,797 29,808 30,826 31,838 32,865 33,883 34,905 35,928
        36,955 37,985 38,1007 40,1047 43,1094 44,1103 45,1123 46,1141 47,1159 48,1168 50,1193 51,1206 52,1217 54,1238 56,1261
        58,1289 60,1313 62,1323 64,1335 66,1348 68,1358 69,1366 70,1376 71,1385 72,1395 73,1397 74,1405 75,1405k 76,1402 77,1400
        79,1392 80,1387 81,1379 82,1367 83,1354 84,1345`), 0, 3, "#008000", "#ff0000");
    series(c200, svg, parse(`0,710 3,714 5,717 8,719 17,719 18,722 24,722 26,725 28,727 31,728 32,731 33,733 37,734 38,737 40,737
        41,734 46,734 47,737 48,734 50,732 52,730 54,728 57,727 60,722 63,718 65,719 67,722 69,727 71,730 75,739 76,740 80,752
        83,760`), 0, 2, "#ffa500", "#ffa500");

    add(svg, "path", { d: "M552 476l5 4.500l-5 4.500z", fill: "#0000ff" });
    buyArrow(svg, 557.5, 536);
    label(svg, 557, 561, "Buy", "", "middle");
    label(svg, 557, 573, "0.12M @ 1.2791", "", "middle");
    label(svg, 1307, 618, "Ticks remaining =2", "", "end");

    hline(svg, 1008, 1317, 72, "#00ffff", 2);
    hline(svg, 1008, 1317, 242, "#00ffff", 2);
    hline(svg, 1008, 1317, 463, "#ffc0cb", 2);
    hline(svg, 1008, 1331, 480, "#deb887", 2);
    order(svg, 912.5, 73, "0.06M", "Sell LMT", "#00ff00");
    order(svg, 912.5, 243, "0.06M", "Sell LMT", "#00ff00");
    order(svg, 912.5, 464, "0.12M", "Sell STP", "#add8e6");
    position(svg, 917, 481);
    [72, 242, 463].forEach(y => cancelBox(svg, 1316, y));

    axisLabels(c200, svg, [[141, "1.2801"], [175, "1.2800"], [209, "1.2799"], [277, "1.2797"], [311, "1.2796"],
        [413, "1.2793"], [514, "1.2790"], [548, "1.2789"], [582, "1.2788"]]);
    tag(c200, svg, 55, "1.28035", "#008000", 42, "light");
    tag(c200, svg, 72, "1.2803", "#00ffff", 36);
    tag(c200, svg, 106, "1.28020", "#0000ff", 42, "light");
    tag(c200, svg, 225, "1.27985", "#00ffff", 42);
    tag(c200, svg, 253, "1.27977", "#ffa500", 42);
    tag(c200, svg, 242, "1.2798", "#00ffff", 36);
    tag(c200, svg, 344, "1.2795", "#000", 36, "light");
    tag(c200, svg, 372, "1.27942", "#008000", 42, "light");
    tag(c200, svg, 361, "1.27945", "#ff00ff", 42, "light");
    tag(c200, svg, 376, "1.27941", "#0000ff", 42, "light");
    tag(c200, svg, 448, "1.27919", "#008000", 42, "light");
    tag(c200, svg, 463, "1.2791'5", "#ffc0cb", 44);
    tag(c200, svg, 480, "1.2791", "#deb887", 36);
    tag(c200, svg, 497, "1.27905", "#ffff00", 42);
    tag(c200, svg, 615, "1.27870", "#0000ff", 42, "light");
    hline(svg, 0, 1400, 633.5, "#000");
}

function macd200() {
    const svg = makePane(c200, 634, 202, "TDMACD");
    frame(c200, svg, [824.5]);
    label(svg, 47, 652, "TDMACD($EURUSD (200 Tick),5,20,30)");
    histogram(c200, svg, values(`319 277 292 300 313 334 290 260 214 215 230 253 307 310 310 322 351 424 445 397 338 323 316 346 319
        370 439 487 550 524 496 460 500 514 488 506 532 569 538 538 514 479 448 466 371 337 302 290 211 181 178 164 158 143 149
        170 157 167 173 151 158 133 121 107 86 106 164 244 235 259 244 236 244 247 265 218 163 202 184 176 146 85 58 59 79`), 630, 708.5);
    series(c200, svg, parse(`0,293 1,290 2,289 3,290 4,291 5,295 6,295 7,292 8,287 9,284 10,281 11,278 12,280 13,281 14,284 15,287
        16,290 17,299 18,307 19,314 20,317 22,317 23,319 24,320 25,323 26,328 27,340 28,352 29,363 30,373 31,380 32,386 33,395
        35,406 36,415 37,424 38,433 39,440 40,445 42,445 43,448 44,443 45,437 46,428 47,419 48,407 50,377 51,365 52,350 55,314
        58,287 59,278 60,272 63,245 64,233 65,227 66,221 67,223 68,223 69,226 71,227 72,229 73,229 74,233 75,232 76,227 77,227
        79,221 80,215 81,206 82,197 83,188 84,182`), 630, 2, "#008000", "#ff0000");
    axisLabels(c200, svg, [[670, "0.0001"], [709, "0"], [747, "-0.0001"], [787, "-0.0002"], [825, "-0.0003"]]);
    tag(c200, svg, 656, "0.000135", "#ff0000", 48, "light");
    tag(c200, svg, 690, "0.0000476", "#008000", 54, "light");
    hline(svg, 0, 1400, 835.5, "#000");
}

function stoch200() {
    const svg = makePane(c200, 836, 163, "TDStochastics");
    frame(c200, svg, [854.5, 978.5]);
    label(svg, 47, 853, "TDStochastics($EURUSD (200 Tick),3,5,2), TDSMA(TDStochastics($EURUSD (200 Tick),3,5,2).K,50)");
    series(c200, svg, values(`911 836 868 970 959 973 850 698 712 772 860 940 1003 960 880 869 940 1060 1054 890 736 736 787 890 928
        934 1030 1060 1066 998 860 718 820 1027 949 956 1072 1108 1018 988 958 845 822 965 865 698 730 730 697 697 799 799 766
        778 870 1027 988 929 952 821 770 724 698 737 667 765 976 1057 976 934 892 787 818 868 907 790 632 800 868 779 748 695
        683 745 857`), 630, 1, "#222", "#222");
    series(c200, svg, parse(`0,818 1,800 2,785 3,805 4,832 5,865 6,880 7,879 8,878 9,869 10,860 11,854 12,868 13,886 14,904 15,919
        16,931 17,963 18,1003 19,1024 20,1010 21,986 22,977 23,968 24,946 25,932 26,929 27,923 28,926 29,932 30,940 31,940k
        32,949 33,973 34,979 35,997 36,1027 37,1060 38,1078 39,1077 40,1063 41,1039 42,1010 43,998 44,973 45,957 46,967 47,967
        48,952 49,932 50,923 51,917 52,908 53,887 54,878 55,884 56,898 57,922 58,946 59,952 60,944 61,920 62,889 63,865 64,845
        65,833 66,836 67,835 68,829 69,832 70,848 71,853 72,857 73,854 74,853 75,840 76,797 77,770 78,748 79,725 80,712 81,712
        82,697 83,667 84,659`), 630, 3, "#008000", "#ff0000");
    series(c200, svg, values(`884 878 871 893 934 969 929 840 752 727 784 857 935 967 950 902 896 950 1018 1003 893 787 755 805 868
        919 965 1009 1052 1043 976 860 806 860 934 976 991 1045 1066 1040 988 932 875 878 884 845 766 722 721 710 730 766 787
        782 802 895 961 983 956 902 848 772 731 719 702 724 802 932 1003 990 935 872 832 824 866 857 776 740 767 814 800 740
        710 707 761`), 630, 2, "#0000ff", "#ff0000");
    hline(svg, 45, 1331, 871.5, "#9acd32");
    hline(svg, 45, 1331, 911.5, "#a0a0a0");
    hline(svg, 45, 1331, 927.5, "#a0a0a0");
    hline(svg, 45, 1331, 967.5, "#9400d3");
    label(svg, 47, 993, "© 2012 NinjaTrader, LLC");
    axisLabels(c200, svg, [[855, "55"], [897, "50"], [938, "45"], [979, "40"]]);
    leftLabels(svg, [[872, "80"], [904, "60"], [936, "40"], [968, "20"]]);
    tag(c200, svg, 849, "55.7", "#008000", 23, "light");
    focusBox(svg, 849.5);
    leftTag(svg, 883, "72.42", "#ff0000");
    leftTag(svg, 915, "52.68", "#000");
}

price600();
macd600();
stoch600();
bars600();
timeAxis(c600, 717, 28);

price200();
macd200();
stoch200();
timeAxis(c200, 999, 27);
```
